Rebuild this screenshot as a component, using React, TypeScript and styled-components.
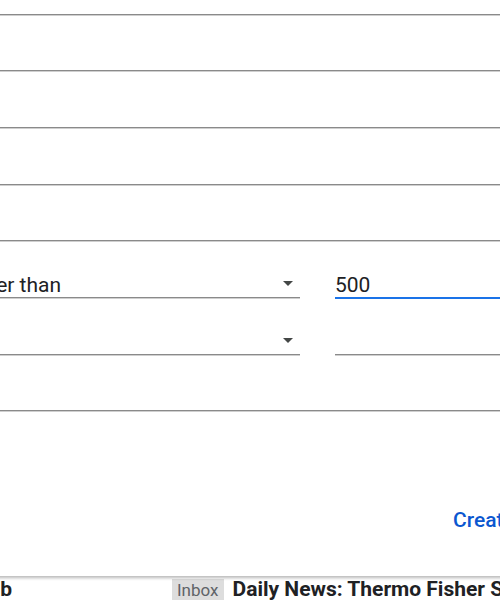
import React from 'react';
import styled, { createGlobalStyle } from 'styled-components';

// GLOBAL
const GlobalStyle = createGlobalStyle`
  html, body {
    margin: 0;
    padding: 0;
    background: #ffffff;
  }
  body {
    font-family: Roboto, "Liberation Sans", Arial, sans-serif;
    color: #202124;
  }
`;

// COMPONENT
const App: React.FC = () => {
  return (
    <Viewport>
      <GlobalStyle />
      <FilterPanel>
        {[0, 1, 2, 3, 4].map((i) => (
          <FieldRow key={i}>
            <Field />
          </FieldRow>
        ))}
        <FieldRow>
          <Select>
            <span>greater than</span>
            <Caret />
          </Select>
          <Field focused>500</Field>
        </FieldRow>
        <FieldRow>
          <Select>
            <span />
            <Caret />
          </Select>
          <Field />
        </FieldRow>
        <FieldRow>
          <Field />
        </FieldRow>
        <ActionRow>
          <TextButton>Create filter</TextButton>
          <TextButton>Search</TextButton>
        </ActionRow>
      </FilterPanel>
      <MailRow>
        <Sender>Lab</Sender>
        <LabelChip>Inbox</LabelChip>
        <Subject>Daily News: Thermo Fisher Scientific</Subject>
      </MailRow>
    </Viewport>
  );
};

// STYLED COMPONENTS
const Viewport = styled.div`
  width: 500px;
  height: 600px;
  overflow: hidden;
  background: #ffffff;
`;

const FilterPanel = styled.div`
  position: relative;
  z-index: 2;
  width: 900px;
  margin-left: -220px;
  margin-top: -42px;
  padding-bottom: 36px;
  background: #ffffff;
  box-shadow: 0 2px 3px rgba(0, 0, 0, 0.28);
`;

const FieldRow = styled.div`
  display: flex;
  align-items: stretch;
  height: calc(170px / 3);
  padding-left: 168px;
`;

const Field = styled.div<{ focused?: boolean }>`
  flex: 1;
  display: flex;
  align-items: flex-end;
  box-sizing: border-box;
  font-size: 21px;
  line-height: 24px;
  color: #202124;
  border-bottom: 1px solid ${(p) => (p.focused ? '#1a73e8' : '#8a8a8a')};
  box-shadow: ${(p) => (p.focused ? '0 1px 0 #1a73e8' : '0 1px 0 #cfcfcf')};
`;

const Select = styled.div`
  width: 352px;
  flex: none;
  margin-right: 35px;
  display: flex;
  align-items: flex-end;
  justify-content: space-between;
  box-sizing: border-box;
  font-size: 21px;
  line-height: 24px;
  border-bottom: 1px solid #8a8a8a;
  box-shadow: 0 1px 0 #cfcfcf;
`;

const Caret = styled.span`
  width: 0;
  height: 0;
  margin: 0 7px 11px 0;
  border-left: 5.5px solid transparent;
  border-right: 5.5px solid transparent;
  border-top: 5px solid #444746;
`;

const ActionRow = styled.div`
  display: flex;
  justify-content: flex-start;
  align-items: center;
  gap: 24px;
  height: 40px;
  margin-top: 89px;
  padding-left: 673px;
`;

const TextButton = styled.button`
  border: none;
  background: none;
  padding: 0;
  font-family: Roboto, "Liberation Sans", Arial, sans-serif;
  font-size: 21px;
  font-weight: 500;
  color: #0b57d0;
  white-space: nowrap;
  cursor: pointer;
`;

const MailRow = styled.div`
  display: flex;
  align-items: flex-start;
  padding-top: 1px;
  margin-left: -220px;
  width: 900px;
`;

const Sender = styled.div`
  width: 232px;
  flex: none;
  text-align: right;
  font-size: 21px;
  font-weight: 700;
  line-height: 24px;
  color: #202124;
`;

const LabelChip = styled.span`
  margin-left: 160px;
  margin-top: 2px;
  padding: 0 5px;
  background: #dddddd;
  color: #5f6368;
  font-size: 17px;
  line-height: 22px;
`;

const Subject = styled.div`
  margin-left: 9px;
  font-size: 21px;
  font-weight: 700;
  line-height: 24px;
  white-space: nowrap;
  color: #202124;
`;

export default App;
